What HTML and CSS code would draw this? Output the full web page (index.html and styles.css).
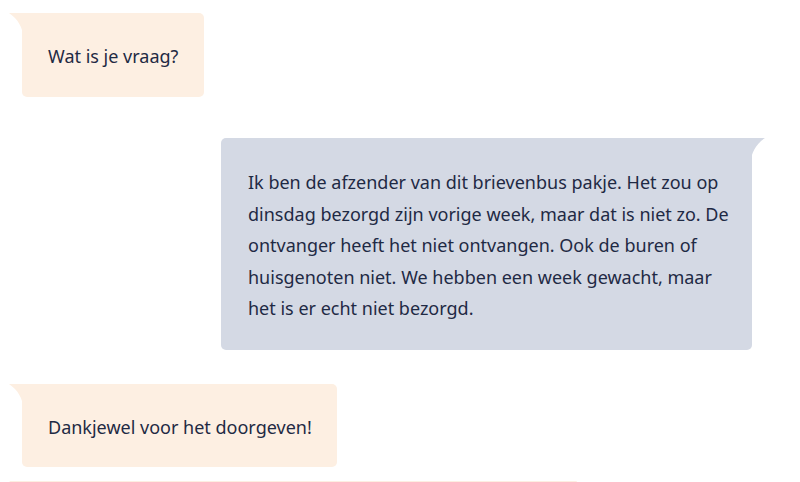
FILE: index.html
```html
<!DOCTYPE html>
<html lang="nl"><head><meta charset="utf-8"><link rel="stylesheet" href="styles.css"></head>
<body>
<main class="chat">
  <div class="bubble bot q1"><p>Wat is je vraag?</p></div>
  <div class="bubble user"><p>Ik ben de afzender van dit brievenbus pakje. Het zou op dinsdag bezorgd zijn vorige week, maar dat is niet zo. De ontvanger heeft het niet ontvangen. Ook de buren of huisgenoten niet. We hebben een week gewacht, maar het is er echt niet bezorgd.</p></div>
  <div class="bubble bot q2"><p>Dankjewel voor het doorgeven!</p></div>
  <div class="bubble bot next"></div>
</main>
</body></html>
```
FILE: styles.css
```css
html,body{margin:0;padding:0;background:#fff;overflow:hidden;height:482px}
body{font-family:"Noto Sans",sans-serif;font-size:18px;line-height:31px;color:#1f2a44}
.chat{display:flex;flex-direction:column;align-items:flex-start;padding:13px 0 0 22px;height:482px;box-sizing:border-box;overflow:hidden}
.bubble{position:relative;border-radius:0 5px 5px 5px;box-sizing:border-box;flex:none}
.bubble p{margin:0}
.bot{background:#fdefe2;white-space:nowrap}
.bot::before{content:"";position:absolute;left:-14px;top:0;width:15px;height:24px;background:#fdefe2;clip-path:path("M1 0 H15 V24 C15 15 10 6 1 0 Z")}
.user{background:#d4d9e4;border-radius:5px 0 5px 5px;margin:41px 0 0 199px;width:531px;height:212px;padding:29px 12px 0 27px;line-height:31.5px}
.user::after{content:"";position:absolute;right:-14px;top:0;width:15px;height:24px;background:#d4d9e4;clip-path:path("M14 0 H0 V24 C0 15 5 6 14 0 Z")}
.q1{width:182px;height:84px;padding:28px 0 0 26px}
.q2{margin-top:34px;width:315px;height:83px;padding:28px 0 0 26px}
.next{margin-top:14px;width:555px;height:1px;border-radius:0 2px 0 0}
.next::before{height:1px}
```
